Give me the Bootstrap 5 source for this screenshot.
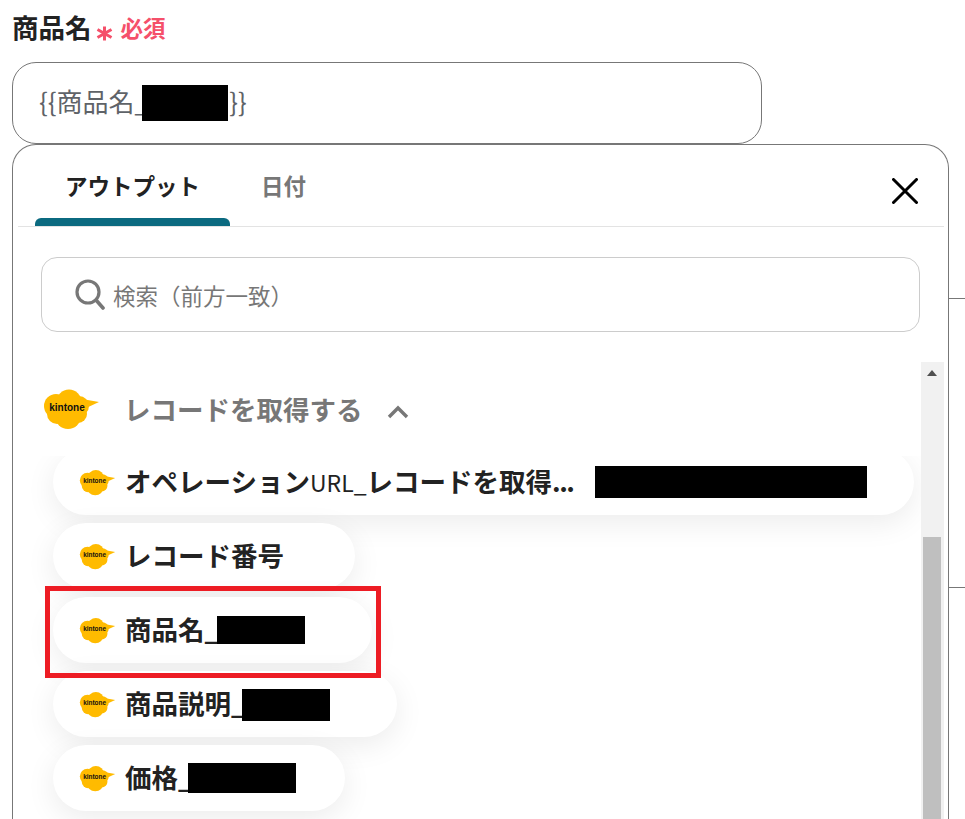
<!DOCTYPE html>
<html lang="ja">

<head>
    <meta charset="UTF-8" />
    <title>商品名</title>
    <link rel="stylesheet" href="https://cdn.jsdelivr.net/npm/bootstrap@5.3.0/dist/css/bootstrap.min.css" />
    <style>
        html, body {
            height: 819px;
            overflow: hidden;
            background: #fff;
        }

        body {
            font-family: "Noto Sans CJK JP", "Noto Sans", sans-serif;
            color: #222;
            position: relative;
        }

        .page {
            padding: 0 0 0 12px;
            width: 949px;
        }

        .field-label {
            height: 62px;
            font-size: 26.5px;
            line-height: 54px;
            font-weight: 700;
        }

        .required-text {
            font-size: 22.5px;
            color: #f5506a;
            margin-left: 8px;
            font-weight: 700;
        }

        .required-star {
            width: 17px;
            height: 15px;
            margin-left: 4px;
            margin-top: 26px;
            flex: none;
        }

        .value-box {
            width: 750px;
            height: 82px;
            border: 1px solid #777;
            border-radius: 24px;
            padding: 0 0 0 26px;
            font-size: 26px;
            color: #5f6368;
        }

        .value-text {
            margin-top: -6px;
        }

        .redact {
            display: inline-block;
            background: #000;
            flex: none;
        }

        .redact-input { width: 86px; height: 36px; margin-left: -7px; margin-right: 1px; }
        .redact-url { width: 272px; height: 32px; margin-left: 22px; }
        .redact-name { width: 88px; height: 28px; margin-left: -3px; }
        .redact-desc { width: 88px; height: 32px; margin-top: 2px; margin-left: -4px; }
        .redact-price { width: 108px; height: 30px; margin-left: -5px; }

        .picker {
            height: 675px;
            border: 1px solid #777;
            border-radius: 24px 24px 0 0;
            border-bottom: 0;
            padding: 0 4px 0 5px;
        }

        .picker-tabs {
            height: 82px;
            border-bottom: 1px solid #e3e3e3;
            padding-left: 17px;
        }

        .picker-tab {
            width: 195px;
            padding-top: 24px;
            font-size: 22.5px;
            font-weight: 700;
            text-align: center;
            color: #777;
        }

        .picker-tab.on {
            color: #222;
        }

        .tab-bar {
            height: 8px;
            background: #0b6a80;
            border-radius: 6px 6px 0 0;
            margin-top: 8px;
        }

        .picker-tab.off {
            width: auto;
            margin-left: 31px;
        }

        .picker-close {
            width: 26px;
            height: 26px;
            margin: 33px 26px 0 auto;
        }

        .search-box {
            margin: 30px 24px 0 23px;
            height: 75px;
            border: 1px solid #ccc;
            border-radius: 16px;
            padding-left: 33px;
            gap: 8px;
        }

        .search-box input {
            font-size: 22.5px;
            padding: 2px 0 0;
            box-shadow: none;
            font-family: inherit;
        }

        .search-box input::placeholder {
            color: #777;
        }

        .scroll-area {
            margin-top: 30px;
            height: 457px;
        }

        .scroll-main {
            min-width: 0;
        }

        .group-head {
            height: 94px;
            padding: 0 0 0 25px;
            font-size: 26.5px;
            font-weight: 700;
            color: #777;
            background: #fff;
            position: relative;
            z-index: 2;
        }

        .group-logo {
            width: 57px;
            height: 42px;
            margin-right: 24px;
        }

        .group-chevron {
            width: 22px;
            height: 14px;
            margin-left: 24px;
            margin-top: 6px;
        }

        .out-list {
            padding: 0 6px 0 35px;
            margin-top: -7px;
            gap: 8px;
        }

        .out-item {
            height: 66px;
            border-radius: 33px;
            background: #fff;
            box-shadow: 0 8px 30px rgba(0, 0, 0, .08);
            padding-left: 26px;
            font-size: 26.5px;
            font-weight: 700;
            white-space: nowrap;
        }

        .out-item > span:not(.redact) {
            margin-top: -2px;
        }

        .latin-part {
            font-weight: 400;
            font-size: 23px;
        }

        .dots-part {
            letter-spacing: -1.5px;
        }

        .out-logo {
            width: 37px;
            height: 27px;
            margin-right: 9px;
            flex: none;
        }

        .w-url { width: 861px; }
        .w-no { width: 302px; }
        .w-name { width: 319px; }
        .w-desc { width: 344px; }
        .w-price { width: 292px; }

        .fake-scroll {
            width: 23px;
            flex: none;
            background: #f1f1f1;
            padding: 0 3px 0 2px;
        }

        .scroll-up {
            height: 175px;
            padding-top: 8px;
        }

        .scroll-thumb {
            height: 282px;
            background: #bfbfbf;
        }

        .side-rule {
            position: absolute;
            left: 949px;
            width: 16px;
            height: 1px;
            background: #777;
        }

        .rule-a { top: 298px; }
        .rule-b { top: 587px; }

        .mark-box {
            position: absolute;
            left: 45px;
            top: 586px;
            width: 336px;
            height: 92px;
            border: 5px solid #ed1c24;
            z-index: 3;
        }
    </style>
</head>

<body>
    <svg width="0" height="0" class="position-absolute">
        <defs>
            <symbol id="kintoneCloud" viewBox="2 0 55 42">
                <g fill="#ffbb00">
                    <circle cx="14" cy="18" r="12" />
                    <circle cx="27" cy="14" r="12.5" />
                    <circle cx="37" cy="18" r="10" />
                    <circle cx="26" cy="28" r="13" />
                    <circle cx="15" cy="26" r="10" />
                    <circle cx="36" cy="26" r="9" />
                    <path d="M40 11 L57 14 L42 21 Z" />
                </g>
                <text x="25" y="22.5" text-anchor="middle" font-family="Liberation Sans, sans-serif" font-size="10"
                    font-weight="700" fill="#111">kintone</text>
            </symbol>
        </defs>
    </svg>

    <div class="page">
        <div class="field-label d-flex align-items-start">
            <span>商品名</span>
            <svg class="required-star" viewBox="0 0 17 15">
                <path d="M8.5 0.5V14.5M1.5 3.5L15.5 11.5M15.5 3.5L1.5 11.5" stroke="#f5506a" stroke-width="3" fill="none" />
            </svg>
            <span class="required-text">必須</span>
        </div>

        <div class="value-box d-flex align-items-center">
            <span class="value-text">{{商品名_</span><span class="redact redact-input"></span><span class="value-text">}}</span>
        </div>

        <div class="picker">
            <div class="picker-tabs d-flex">
                <div class="picker-tab on d-flex flex-column justify-content-between">
                    <span>アウトプット</span>
                    <div class="tab-bar"></div>
                </div>
                <div class="picker-tab off">日付</div>
                <svg class="picker-close" viewBox="0 0 26 26">
                    <path d="M1.5 1.5L24.5 24.5M24.5 1.5L1.5 24.5" stroke="#000" stroke-width="3" stroke-linecap="round" />
                </svg>
            </div>

            <div class="search-box d-flex align-items-center">
                <svg width="30" height="32" viewBox="0 0 30 32" class="flex-shrink-0">
                    <circle cx="13" cy="13" r="11" fill="none" stroke="#777" stroke-width="3.2" />
                    <path d="M21 21L28 29" stroke="#777" stroke-width="3.6" stroke-linecap="round" />
                </svg>
                <input type="text" class="form-control border-0 bg-transparent" placeholder="検索（前方一致）" />
            </div>

            <div class="scroll-area d-flex">
                <div class="scroll-main flex-grow-1 overflow-hidden">
                    <div class="group-head d-flex align-items-center">
                        <svg class="group-logo"><use href="#kintoneCloud" /></svg>
                        <span>レコードを取得する</span>
                        <svg class="group-chevron" viewBox="0 0 22 14">
                            <path d="M2 12L11 3L20 12" fill="none" stroke="#777" stroke-width="3.4" />
                        </svg>
                    </div>
                    <div class="out-list d-flex flex-column">
                        <div class="out-item w-url d-flex align-items-center">
                            <svg class="out-logo"><use href="#kintoneCloud" /></svg>
                            <span>オペレーション<span class="latin-part">URL_</span>レコードを取得<span class="dots-part">...</span></span>
                            <span class="redact redact-url"></span>
                        </div>
                        <div class="out-item w-no d-flex align-items-center">
                            <svg class="out-logo"><use href="#kintoneCloud" /></svg>
                            <span>レコード番号</span>
                        </div>
                        <div class="out-item w-name d-flex align-items-center">
                            <svg class="out-logo"><use href="#kintoneCloud" /></svg>
                            <span>商品名_</span><span class="redact redact-name"></span>
                        </div>
                        <div class="out-item w-desc d-flex align-items-center">
                            <svg class="out-logo"><use href="#kintoneCloud" /></svg>
                            <span>商品説明_</span><span class="redact redact-desc"></span>
                        </div>
                        <div class="out-item w-price d-flex align-items-center">
                            <svg class="out-logo"><use href="#kintoneCloud" /></svg>
                            <span>価格_</span><span class="redact redact-price"></span>
                        </div>
                    </div>
                </div>
                <div class="fake-scroll">
                    <div class="scroll-up d-flex justify-content-center">
                        <svg width="10" height="6" viewBox="0 0 10 6"><path d="M5 0L10 6H0Z" fill="#505050" /></svg>
                    </div>
                    <div class="scroll-thumb"></div>
                </div>
            </div>
        </div>
    </div>

    <div class="side-rule rule-a"></div>
    <div class="side-rule rule-b"></div>
    <div class="mark-box"></div>

    <script src="https://cdn.jsdelivr.net/npm/bootstrap@5.3.0/dist/js/bootstrap.bundle.min.js"></script>
</body>

</html>
